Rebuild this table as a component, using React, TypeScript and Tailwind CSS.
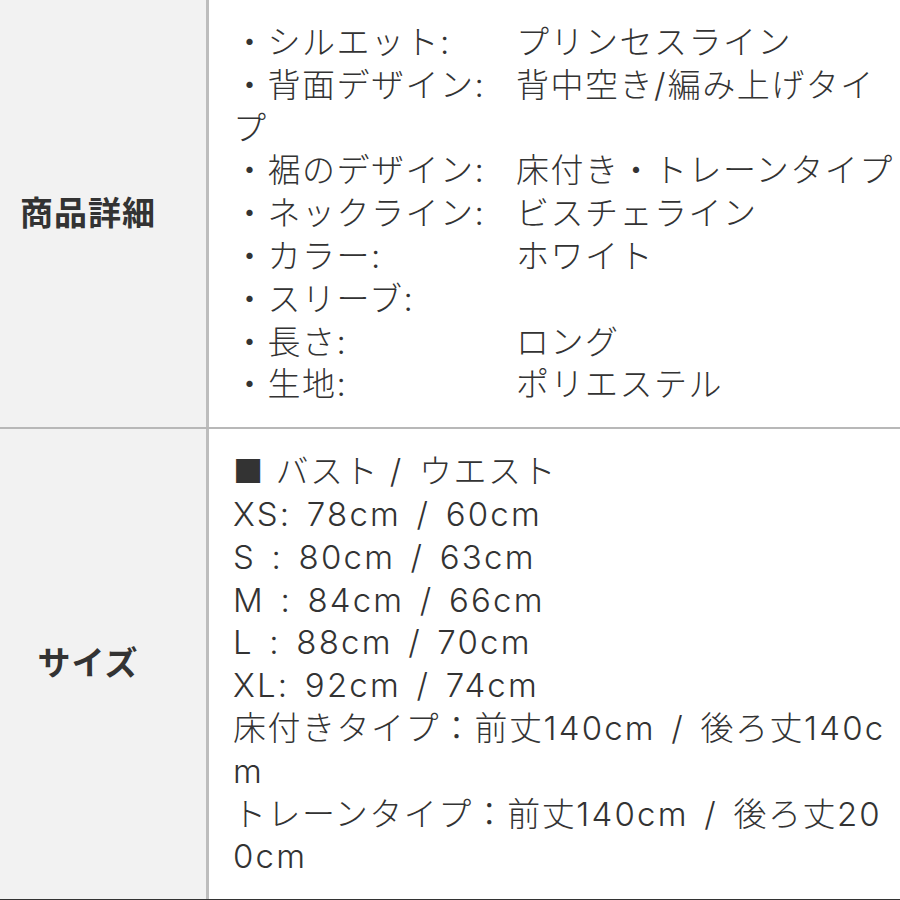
const specs: [string, string][] = [
  ['・シルエット:', 'プリンセスライン'],
  ['・背面デザイン:', '背中空き/編み上げタイプ'],
  ['・裾のデザイン:', '床付き・トレーンタイプ'],
  ['・ネックライン:', 'ビスチェライン'],
  ['・カラー:', 'ホワイト'],
  ['・スリーブ:', ''],
  ['・長さ:', 'ロング'],
  ['・生地:', 'ポリエステル'],
]

const sizes = [
  '■ バスト / ウエスト',
  'XS: 78cm / 60cm',
  'S : 80cm / 63cm',
  'M : 84cm / 66cm',
  'L : 88cm / 70cm',
  'XL: 92cm / 74cm',
  '床付きタイプ：前丈140cm / 後ろ丈140cm',
  'トレーンタイプ：前丈140cm / 後ろ丈200cm',
]

const font = {
  fontFamily: 'Inter, "Noto Sans CJK JP", sans-serif',
}

// Latin runs get a little extra tracking so they sit as wide as the reference
function Mixed({ text }: { text: string }) {
  const parts = text.split(/([\x21-\x7e][\x20-\x7e]*)/).filter(Boolean)
  return (
    <>
      {parts.map((p, i) =>
        /^[\x21-\x7e]/.test(p) ? (
          <span key={i} className="tracking-[2.2px] [word-spacing:4px]">
            {p}
          </span>
        ) : (
          <span key={i}>{p}</span>
        ),
      )}
    </>
  )
}

export default function App() {
  return (
    <div className="w-[900px] h-[900px] overflow-hidden bg-white text-[#333]" style={font}>
      <div className="flex border-b-2 border-[#b8b8b8]">
        <div className="w-[209px] shrink-0 bg-[#f2f2f2] flex items-center justify-center pr-[30px] border-r-[3px] border-[#bdbdbd]">
          <span className="text-[33px] font-bold tracking-[1px]">商品詳細</span>
        </div>
        <div className="flex-1 pl-[24px] pr-[2px] py-[21px] text-[33px] font-light leading-[42.8px] tracking-[1.5px] break-all">
          {specs.map(([label, value]) => (
            <div key={label}>
              <span className="inline-block w-[283px]">
                <Mixed text={label} />
              </span>
              <Mixed text={value} />
            </div>
          ))}
        </div>
      </div>
      <div className="flex border-b-2 border-[#333]">
        <div className="w-[209px] shrink-0 bg-[#f2f2f2] flex items-center justify-center pr-[30px] border-r-[3px] border-[#bdbdbd]">
          <span className="text-[33px] font-bold tracking-[1px]">サイズ</span>
        </div>
        <div className="flex-1 pl-[24px] pr-[2px] py-[21px] text-[33px] font-light leading-[42.8px] tracking-[1.5px] break-all">
          {sizes.map((line) => (
            <div key={line}>
              <Mixed text={line} />
            </div>
          ))}
        </div>
      </div>
    </div>
  )
}
